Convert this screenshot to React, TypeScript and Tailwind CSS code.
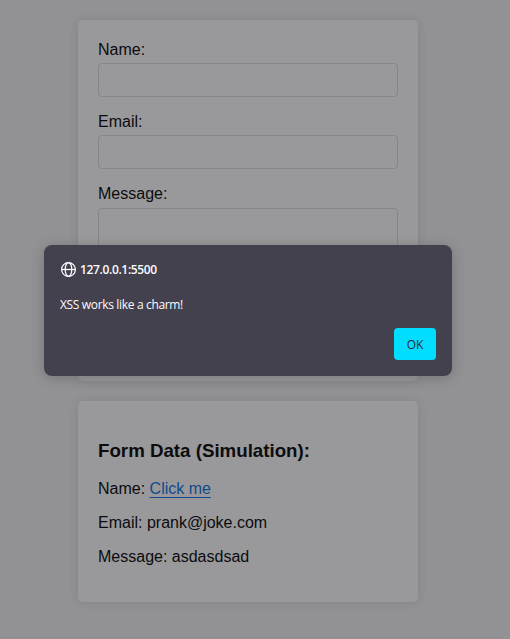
const card =
  "w-[340px] rounded-[5px] bg-[#99999b] px-5 shadow-[0_0_10px_rgba(0,0,0,0.1)]";

function Field({ label }: { label: string }) {
  return (
    <div className="mb-[15px]">
      <label className="mb-[4px] block h-[18px] leading-[18px]">{label}</label>
      <input
        type="text"
        className="block h-[34px] w-full rounded-[4px] border border-[#868688] bg-transparent px-2 outline-none"
      />
    </div>
  );
}

function Globe() {
  return (
    <svg
      viewBox="0 0 16 16"
      className="h-4 w-4 shrink-0"
      fill="none"
      stroke="#fbfbfe"
      strokeWidth="1.25"
    >
      <circle cx="8.5" cy="8.5" r="6.9" />
      <ellipse cx="8.5" cy="8.5" rx="3.3" ry="6.9" />
      <path d="M1.7 8.5h13.6" />
    </svg>
  );
}

export default function App() {
  return (
    <div className="relative h-[639px] w-[510px] overflow-hidden bg-[#929294] font-['Liberation_Sans',Arial,sans-serif] text-[16px] text-[#0c0c0e]">
      <div className="flex flex-col gap-5 pt-5 pl-[78px]">
        <form className={`${card} h-[361px] pt-[21px]`}>
          <Field label="Name:" />
          <div className="mt-4">
            <Field label="Email:" />
          </div>
          <label className="mt-4 mb-[5px] block h-[18px] leading-[18px]">Message:</label>
          <textarea className="block h-[100px] w-full resize-none rounded-[4px] border border-[#868688] bg-transparent p-2 outline-none" />
        </form>
        <section className={`${card} h-[201px] pt-[39px]`}>
          <h3 className="mb-[19px] text-[18.72px] leading-[21px] font-bold">
            Form Data (Simulation):
          </h3>
          <div className="flex flex-col gap-4 leading-[18px]">
            <p>
              Name:{" "}
              <a href="#" className="text-[#104a8c] underline underline-offset-[3px]">
                Click me
              </a>
            </p>
            <p>Email: prank@joke.com</p>
            <p>Message: asdasdsad</p>
          </div>
        </section>
      </div>
      <div
        role="dialog"
        className="absolute top-[245px] left-[44px] flex h-[131px] w-[408px] flex-col rounded-[8px] bg-[#44414e] px-4 pt-4 pb-4 font-['Open_Sans','Noto_Sans',sans-serif] text-[12px] text-[#fbfbfe] shadow-[0_2px_14px_rgba(0,0,0,0.2)]"
      >
        <div className="flex h-4 items-center gap-1 font-semibold">
          <Globe />
          <span className="pt-px tracking-[-0.35px]">127.0.0.1:5500</span>
        </div>
        <p className="mt-5 h-4 leading-4 tracking-[-0.34px]">XSS works like a charm!</p>
        <button className="mt-auto h-8 w-[42px] self-end rounded-[4px] bg-[#00ddff] pt-px text-[#2b2a33]">
          OK
        </button>
      </div>
    </div>
  );
}
